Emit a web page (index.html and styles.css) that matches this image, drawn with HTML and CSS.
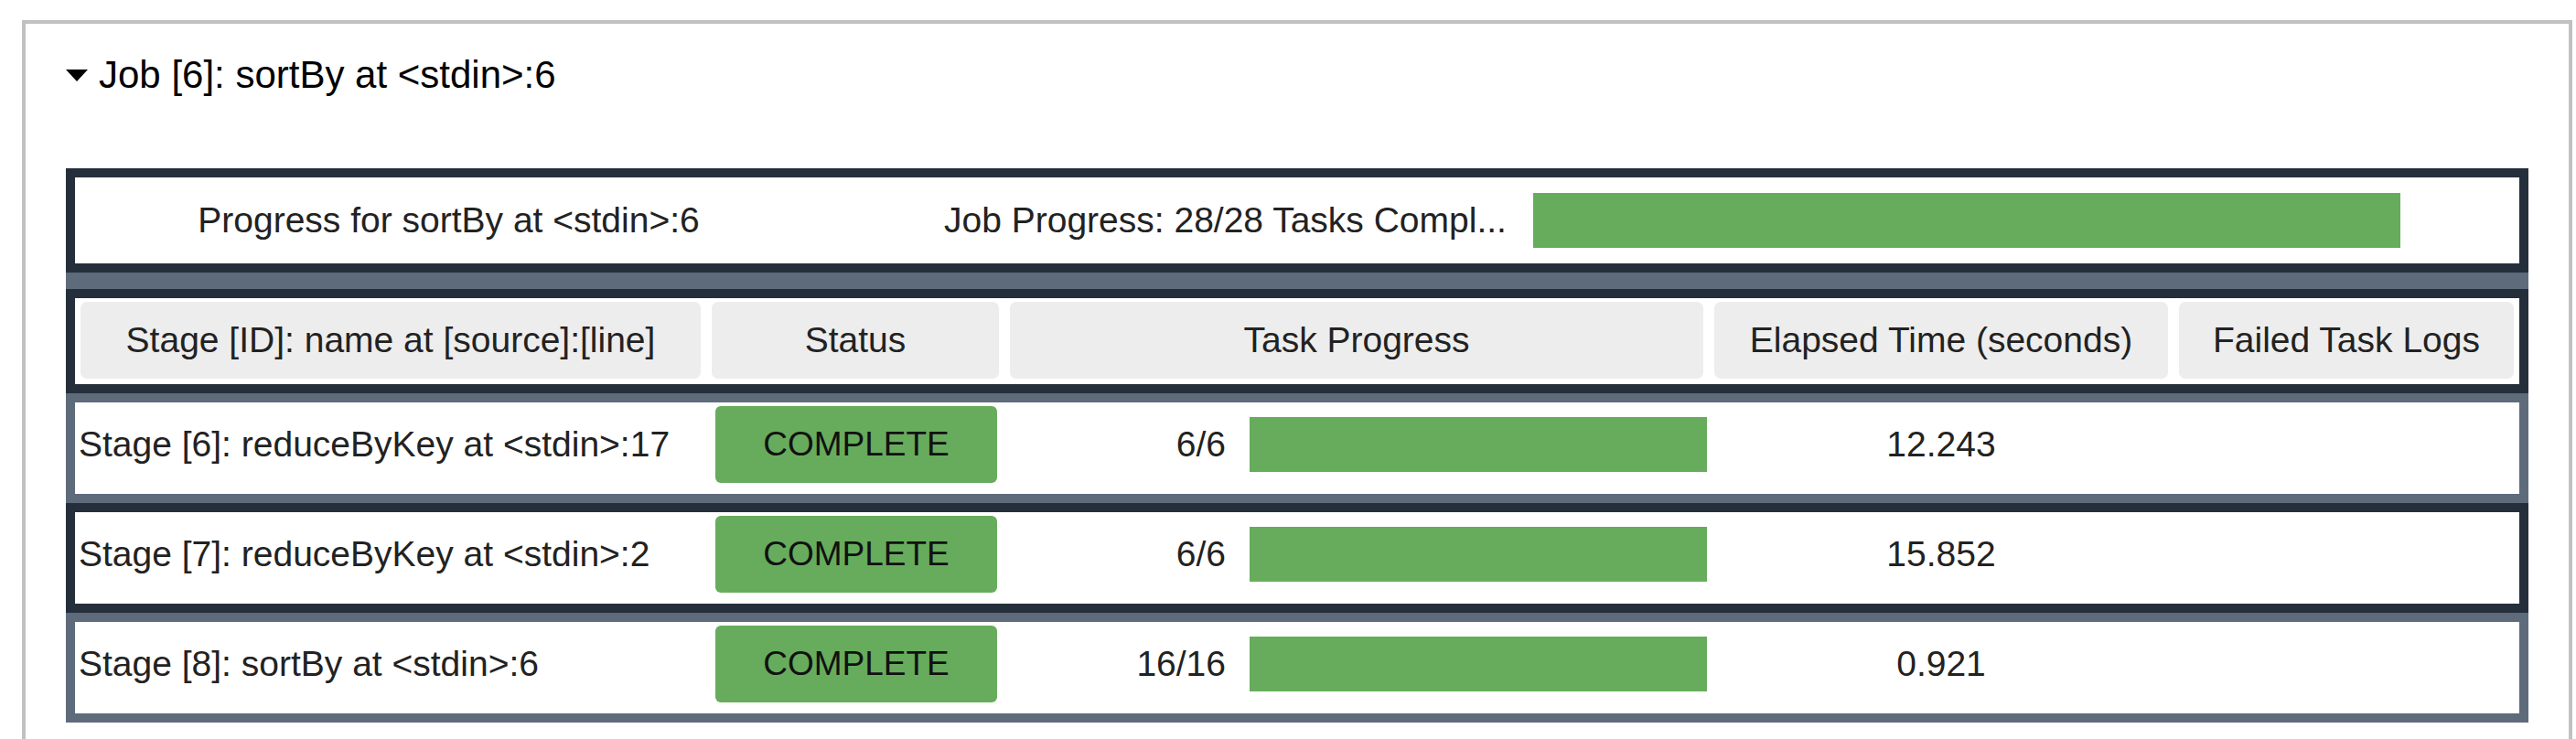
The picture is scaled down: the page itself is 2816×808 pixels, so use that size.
FILE: index.html
```html
<!DOCTYPE html>
<html>
<head>
<meta charset="utf-8">
<title>Job [6]: sortBy at &lt;stdin&gt;:6</title>
<link rel="stylesheet" href="styles.css">
</head>
<body>
<div class="job-panel">
  <div class="job-title">
    <svg class="caret" width="24" height="13" viewBox="0 0 24 13"><polygon points="0,0 24,0 12,13" fill="#000"/></svg>
    <span>Job [6]: sortBy at &lt;stdin&gt;:6</span>
  </div>
  <div class="job-table">
    <div class="job-summary">
      <div class="summary-name">Progress for sortBy at &lt;stdin&gt;:6</div>
      <div class="summary-text">Job Progress: 28/28 Tasks Compl...</div>
      <div class="summary-bar"><div class="bar-fill" style="width:100%"></div></div>
    </div>
    <div class="spacer"></div>
    <div class="stage-head">
      <div class="head-cell">Stage [ID]: name at [source]:[line]</div>
      <div class="head-cell">Status</div>
      <div class="head-cell">Task Progress</div>
      <div class="head-cell">Elapsed Time (seconds)</div>
      <div class="head-cell">Failed Task Logs</div>
    </div>
    <div class="stage-row">
      <div class="stage-name">Stage [6]: reduceByKey at &lt;stdin&gt;:17</div>
      <div class="stage-status"><span class="badge">COMPLETE</span></div>
      <div class="stage-progress"><span class="count">6/6</span><div class="task-bar"><div class="bar-fill" style="width:100%"></div></div></div>
      <div class="stage-time">12.243</div>
      <div class="stage-logs"></div>
    </div>
    <div class="stage-row active">
      <div class="stage-name">Stage [7]: reduceByKey at &lt;stdin&gt;:2</div>
      <div class="stage-status"><span class="badge">COMPLETE</span></div>
      <div class="stage-progress"><span class="count">6/6</span><div class="task-bar"><div class="bar-fill" style="width:100%"></div></div></div>
      <div class="stage-time">15.852</div>
      <div class="stage-logs"></div>
    </div>
    <div class="stage-row">
      <div class="stage-name">Stage [8]: sortBy at &lt;stdin&gt;:6</div>
      <div class="stage-status"><span class="badge">COMPLETE</span></div>
      <div class="stage-progress"><span class="count">16/16</span><div class="task-bar"><div class="bar-fill" style="width:100%"></div></div></div>
      <div class="stage-time">0.921</div>
      <div class="stage-logs"></div>
    </div>
  </div>
</div>
</body>
</html>
```

FILE: styles.css
```css
html, body {
  margin: 0;
  padding: 0;
  background: #ffffff;
}

body {
  font-family: "Liberation Sans", Arial, sans-serif;
  color: #222222;
  overflow: hidden;
}

.job-panel {
  margin: 22px 4px 0 24px;
  border: 4px solid #c1c1c1;
  border-bottom: none;
  padding-bottom: 60px;
}

.job-title {
  display: flex;
  align-items: center;
  gap: 12px;
  margin-top: 32px;
  padding-left: 44px;
  font-size: 42px;
  line-height: 48px;
  height: 48px;
  color: #000000;
}

.caret {
  display: block;
  flex: none;
}

.job-table {
  margin: 78px 44px 0 44px;
  font-size: 39px;
}

.job-summary {
  display: flex;
  align-items: center;
  height: 94px;
  border: 10px solid #252f3b;
  background: #ffffff;
}

.summary-name {
  width: 817px;
  text-align: center;
  white-space: nowrap;
  flex: none;
}

.summary-text {
  width: 644px;
  margin-left: 133px;
  white-space: nowrap;
  overflow: hidden;
  flex: none;
}

.summary-bar {
  width: 948px;
  height: 60px;
  flex: none;
}

.bar-fill {
  height: 100%;
  background: #67ac5c;
}

.spacer {
  height: 18px;
  background: #5e6b7b;
}

.stage-head {
  display: grid;
  grid-template-columns: 678px 314px 758px 496px 366px;
  column-gap: 12px;
  padding: 4px 6px 6px 6px;
  height: 84px;
  border: 10px solid #252f3b;
  background: #ffffff;
}

.head-cell {
  display: flex;
  align-items: center;
  justify-content: center;
  background: #ededed;
  border-radius: 7px;
  white-space: nowrap;
  height: 84px;
}

.stage-row {
  display: grid;
  grid-template-columns: 696px 314px 782px 496px 1fr;
  align-items: center;
  padding-top: 4px;
  height: 96px;
  border: 10px solid #5e6b7b;
  background: #ffffff;
  align-content: start;
}

.stage-row.active {
  border-color: #252f3b;
}

.stage-row > div {
  height: 84px;
  display: flex;
  align-items: center;
}

.stage-name {
  padding-left: 4px;
  white-space: nowrap;
}

.stage-status {
  padding-left: 4px;
}

.badge {
  display: flex;
  align-items: center;
  justify-content: center;
  width: 308px;
  height: 84px;
  background: #67ac5c;
  border-radius: 6px;
  color: #111111;
  font-size: 37px;
}

.count {
  width: 248px;
  text-align: right;
  flex: none;
}

.task-bar {
  width: 500px;
  height: 60px;
  margin-left: 26px;
  flex: none;
}

.stage-row > .stage-time {
  justify-content: center;
}
```
